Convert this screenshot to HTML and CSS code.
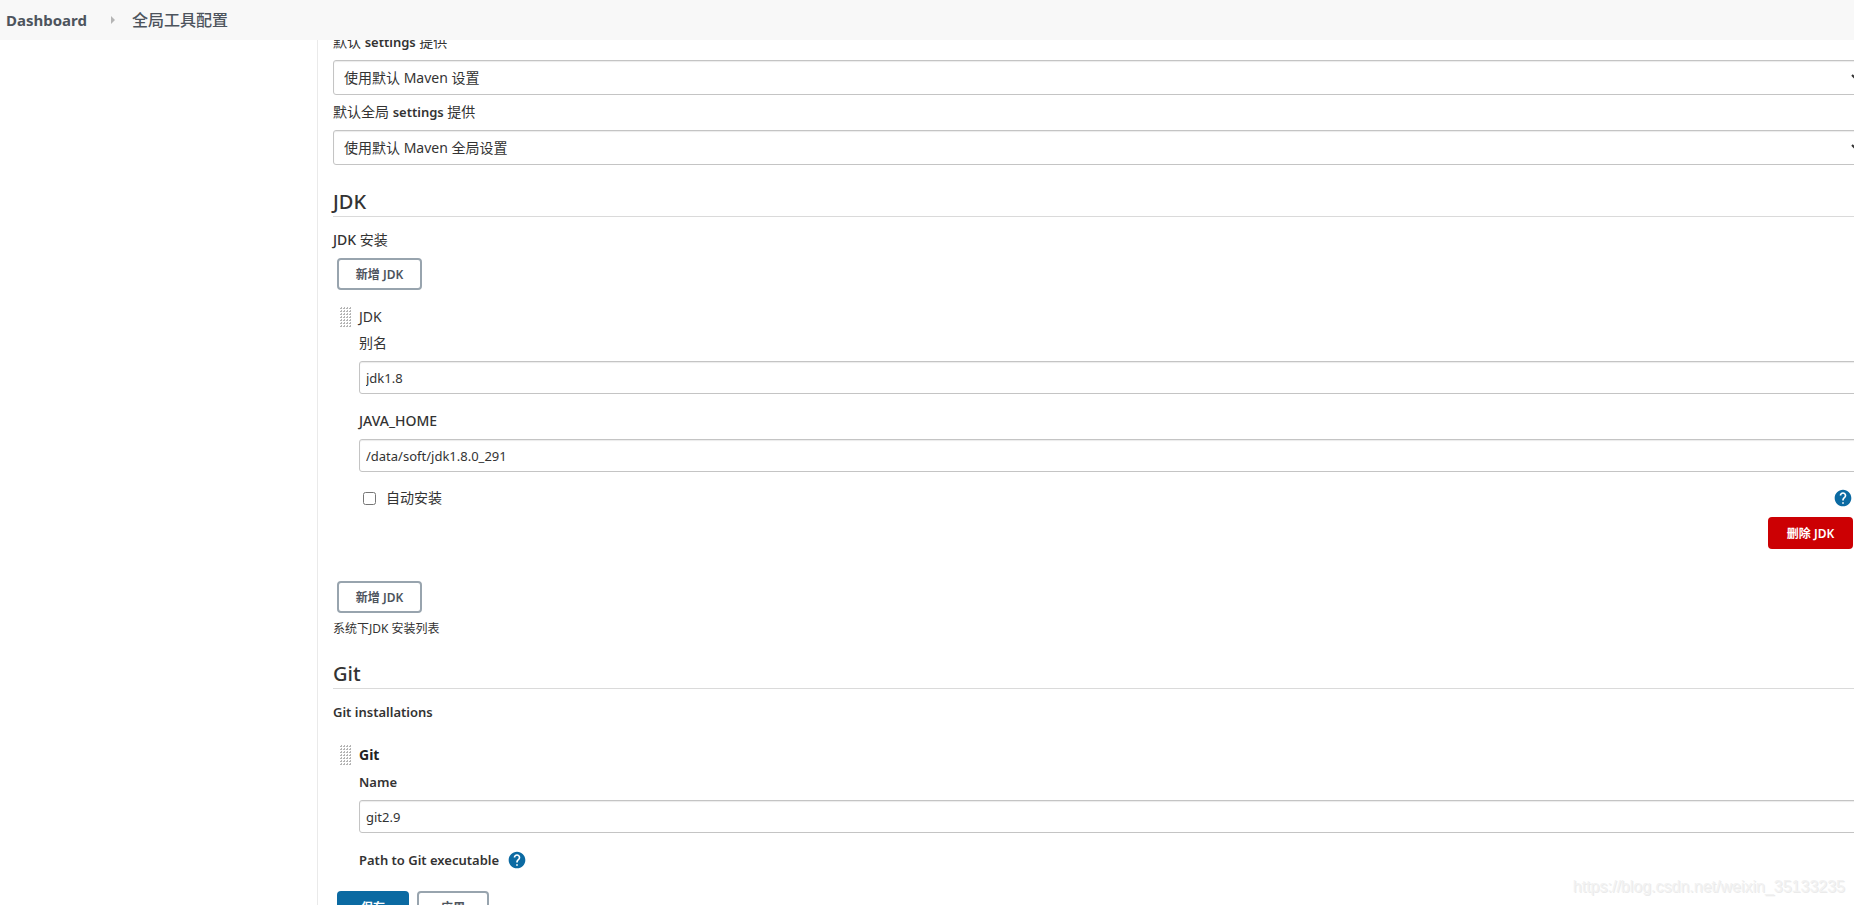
FILE: index.html
```html
<!DOCTYPE html>
<html lang="zh-CN">
<head>
<meta charset="utf-8">
<title>全局工具配置</title>
<link rel="stylesheet" href="styles.css">
</head>
<body>
<svg class="sprite" aria-hidden="true">
  <defs>
    <pattern id="grip-dots" width="3" height="3" patternUnits="userSpaceOnUse">
      <path d="M1 0h1v2H0V1h1z" fill="#b4b4b4"/>
    </pattern>
    <symbol id="grip" viewBox="0 0 12 20"><rect width="12" height="20" fill="url(#grip-dots)"/></symbol>
    <symbol id="help" viewBox="0 0 24 24">
      <path fill="#0b6aa2" d="M12 2C6.480 2 2 6.480 2 12s4.480 10 10 10 10-4.480 10-10S17.520 2 12 2zm1 17h-2v-2h2v2zm2.070-7.750l-.9.920C13.450 12.900 13 13.500 13 15h-2v-.5c0-1.100.45-2.100 1.170-2.830l1.240-1.260c.37-.36.59-.86.59-1.410 0-1.100-.9-2-2-2s-2 .9-2 2H8c0-2.210 1.790-4 4-4s4 1.790 4 4c0 .88-.36 1.680-.93 2.250z"/>
    </symbol>
  </defs>
</svg>
<header class="breadcrumbs">
  <a href="#">Dashboard</a>
  <svg class="separator" viewBox="0 0 4 8" aria-hidden="true"><path d="M0 0l4 4-4 4z" fill="#b5b5b5"/></svg>
  <a href="#">全局工具配置</a>
</header>
<div class="page">
  <aside class="side-panel"></aside>
  <main class="main-panel">
    <form class="config">
      <div class="field first">
        <label for="settings">默认 <span class="latin">settings</span> 提供</label>
        <select id="settings" class="control wide"><option>使用默认 Maven 设置</option></select>
      </div>
      <div class="field second">
        <label for="global-settings">默认全局 <span class="latin">settings</span> 提供</label>
        <select id="global-settings" class="control wide"><option>使用默认 Maven 全局设置</option></select>
      </div>

      <h2>JDK</h2>
      <div class="caption"><span class="medium">JDK</span> 安装</div>
      <button type="button" class="btn outline">新增 JDK</button>
      <section class="tool">
        <svg class="grip" aria-hidden="true"><use href="#grip"/></svg>
        <div class="tool-body">
          <div class="tool-title">JDK</div>
          <div class="field name">
            <label for="jdk-name">别名</label>
            <input id="jdk-name" class="control" type="text" value="jdk1.8">
          </div>
          <div class="field">
            <label for="java-home" class="medium">JAVA_HOME</label>
            <input id="java-home" class="control" type="text" value="/data/soft/jdk1.8.0_291">
          </div>
          <div class="check-row">
            <input id="auto-install" type="checkbox">
            <label for="auto-install">自动安装</label>
            <button type="button" class="help end" aria-label="帮助"><svg aria-hidden="true"><use href="#help"/></svg></button>
          </div>
          <button type="button" class="btn danger">删除 JDK</button>
        </div>
      </section>
      <button type="button" class="btn outline again">新增 JDK</button>
      <p class="note">系统下JDK 安装列表</p>

      <h2 class="git">Git</h2>
      <div class="caption"><span class="latin">Git installations</span></div>
      <section class="tool">
        <svg class="grip" aria-hidden="true"><use href="#grip"/></svg>
        <div class="tool-body">
          <div class="tool-title strong">Git</div>
          <div class="field git-name">
            <label for="git-name" class="latin">Name</label>
            <input id="git-name" class="control" type="text" value="git2.9">
          </div>
          <div class="field inline">
            <span class="latin">Path to Git executable</span>
            <button type="button" class="help" aria-label="Help"><svg aria-hidden="true"><use href="#help"/></svg></button>
          </div>
        </div>
      </section>
      <div class="actions">
        <button type="submit" class="btn primary">保存</button>
        <button type="button" class="btn outline">应用</button>
      </div>
    </form>
  </main>
</div>
<div class="watermark">https://blog.csdn.net/weixin_35133235</div>
</body>
</html>
```
FILE: styles.css
```css
* { box-sizing: border-box; }

body {
  display: flex;
  flex-direction: column;
  height: 100vh;
  margin: 0;
  overflow: hidden;
  background: #fff;
  color: #333;
  font: 14px/20px "Noto Sans", "Noto Sans CJK SC", sans-serif;
}

.sprite { position: absolute; width: 0; height: 0; }

.breadcrumbs {
  display: flex;
  flex: none;
  align-items: center;
  height: 40px;
  padding-left: 6px;
  background: #f8f8f8;
  font-size: 16px;
}
.breadcrumbs a { color: #4d545d; text-decoration: none; }
.breadcrumbs a:first-child { font-size: 15px; font-weight: 700; }
.breadcrumbs a:last-child { font-weight: 500; }
.separator { width: 4px; height: 8px; margin: 0 17px 0 24px; }

.page { display: flex; flex: 1; min-height: 0; }
.side-panel { flex: none; width: 318px; border-right: 1px solid #eaeaea; }
.main-panel { flex: 1; min-width: 0; overflow: hidden; padding-left: 15px; }

h2 {
  margin: 23px 0 0;
  border-bottom: 1px solid #dadada;
  font-size: 20px;
  font-weight: 500;
  line-height: 28px;
}
h2.git { margin-top: 21px; }
.caption { margin: 13px 0 8px; }
.medium { font-weight: 500; }
.latin { font-size: 13px; font-weight: 600; }

.field { display: flex; flex-direction: column; gap: 8px; margin-top: 17px; }
.field.first { margin-top: -8px; }
.field.second { margin-top: 7px; }
.field.name { margin-top: 6px; }
.field.git-name { margin-top: 7px; }
.field.inline { flex-direction: row; align-items: center; }

.control {
  height: 33px;
  margin: 0 -16px 0 0;
  padding: 0 6px;
  border: 1px solid #c4c4c4;
  border-radius: 3px;
  background: #fff;
  box-shadow: inset 0 1px 1px rgba(0, 0, 0, 0.08);
  color: #333;
  font: 13px/20px "Noto Sans", "Noto Sans CJK SC", sans-serif;
}
.control.wide { height: 35px; margin-right: -11px; font-size: 14px; }

.btn {
  display: block;
  height: 32px;
  min-width: 72px;
  margin: 0 4px;
  padding: 1px 15px 0;
  border: 2px solid transparent;
  border-radius: 4px;
  font: 600 12px/16px "Noto Sans", "Noto Sans CJK SC", sans-serif;
}
.config > .btn, .danger { min-width: 85px; }
.outline { border-color: #98a4ae; background: #fff; color: #4d545d; }
.danger { margin: 8px 1px 0 auto; background: #cc0003; color: #fff; }
.primary { background: #0b6aa2; color: #fff; }
.again { margin-top: 32px; }

.tool { display: flex; gap: 7px; margin-top: 17px; padding-left: 7px; }
.grip { flex: none; width: 12px; height: 20px; }
.tool-body { flex: 1; min-width: 0; }
.tool-title.strong { color: #222; font-weight: 700; }
.caption + .tool { margin-top: 23px; }

.check-row { display: flex; align-items: center; height: 18px; margin: 17px 0 10px; }
.check-row input { width: 13px; height: 13px; margin: 0 10px 0 4px; }
.help { display: flex; padding: 0; border: 0; background: none; }
.help svg { width: 20px; height: 20px; }
.end { margin-left: auto; margin-right: 1px; }
.check-row + .danger { margin-top: 0; }

.note { margin: 6px 0 0; font-size: 12px; }
.actions { display: flex; margin-top: 21px; }

.watermark {
  position: absolute;
  right: 9px;
  bottom: 8px;
  color: #f2f2f2;
  text-shadow: 1px 1px 0 #ebebeb;
  font: 16px/20px "Liberation Sans", Arial, sans-serif;
}
```
